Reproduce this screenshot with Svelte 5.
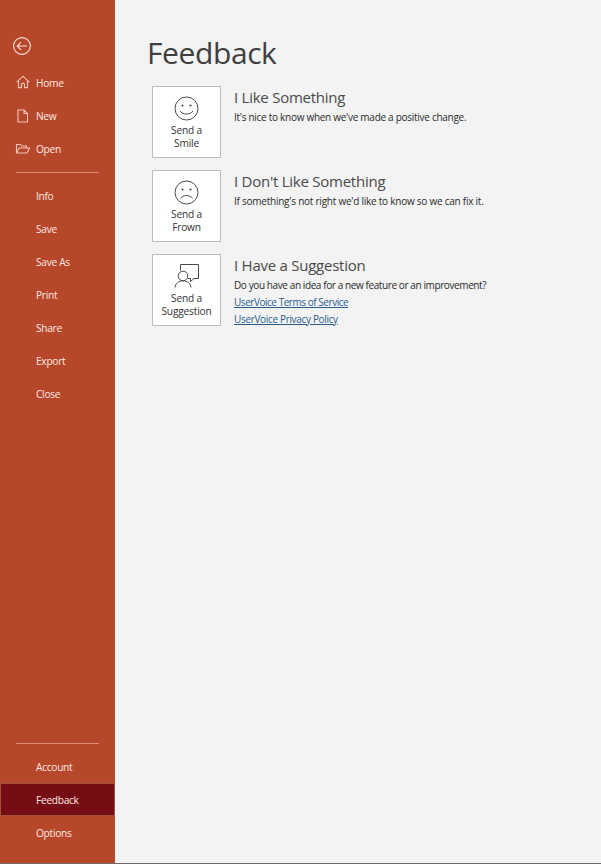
<script>
  const top = [
    { label: 'Home', icon: 'home' },
    { label: 'New', icon: 'new' },
    { label: 'Open', icon: 'open' }
  ];
  const mid = ['Info', 'Save', 'Save As', 'Print', 'Share', 'Export', 'Close'];
  const bottom = ['Account', 'Feedback', 'Options'];
</script>

<div class="page">
  <nav class="side">
    <div class="back">
      <svg width="20" height="20" viewBox="0 0 20 20" fill="none" stroke="#f9e3da" stroke-width="1.1">
        <circle cx="10" cy="10" r="8.4" />
        <path d="M15 10H5.5M9 6.2L5.2 10L9 13.8" />
      </svg>
    </div>
    {#each top as t}
      <div class="item">
        <span class="ic">
          {#if t.icon === 'home'}
            <svg width="16" height="16" viewBox="0 0 16 16" fill="none" stroke="#f3c4b3" stroke-width="1.1">
              <path d="M1.8 8.2L8 2.2L14.2 8.2M3.5 6.8V13.6H6.5V10.5C6.5 8.6 9.5 8.6 9.5 10.5V13.6H12.5V6.8" />
            </svg>
          {:else if t.icon === 'new'}
            <svg width="16" height="16" viewBox="0 0 16 16" fill="none" stroke="#f3c4b3" stroke-width="1.1">
              <path d="M3 3H9L12.5 6.5V15H3ZM9 3V6.5H12.5" />
            </svg>
          {:else}
            <svg width="16" height="16" viewBox="0 0 16 16" fill="none" stroke="#f3c4b3" stroke-width="1.1">
              <path d="M1.5 13V4.5H5.5L6.8 6H11.5V8M1.5 13L4 8H14.5L12 13Z" />
            </svg>
          {/if}
        </span>
        {t.label}
      </div>
    {/each}
    <div class="rule"></div>
    {#each mid as m}
      <div class="item">{m}</div>
    {/each}
    <div class="spacer"></div>
    <div class="rule low"></div>
    {#each bottom as b}
      <div class="item" class:active={b === 'Feedback'}>{b}</div>
    {/each}
  </nav>

  <main class="main">
    <h1>Feedback</h1>
    <section class="row">
      <div class="card">
        <svg width="26" height="26" viewBox="0 0 26 26" fill="none" stroke="#4a4a4a" stroke-width="1">
          <circle cx="12.5" cy="12.5" r="11.5" />
          <circle cx="8.5" cy="9.5" r="1.1" fill="#4a4a4a" stroke="none" />
          <circle cx="16.5" cy="9.5" r="1.1" fill="#4a4a4a" stroke="none" />
          <path d="M6 15C8.5 19 16.5 19 19 15" />
        </svg>
        <span>Send a<br />Smile</span>
      </div>
      <div class="text">
        <h2>I Like Something</h2>
        <p>It's nice to know when we've made a positive change.</p>
      </div>
    </section>
    <section class="row">
      <div class="card">
        <svg width="26" height="26" viewBox="0 0 26 26" fill="none" stroke="#4a4a4a" stroke-width="1">
          <circle cx="12.5" cy="12.5" r="11.5" />
          <circle cx="8.5" cy="9.5" r="1.1" fill="#4a4a4a" stroke="none" />
          <circle cx="16.5" cy="9.5" r="1.1" fill="#4a4a4a" stroke="none" />
          <path d="M6.5 18.5C9 14.5 16 14.5 18.5 18.5" />
        </svg>
        <span>Send a<br />Frown</span>
      </div>
      <div class="text">
        <h2>I Don't Like Something</h2>
        <p class="loose">If something's not right we'd like to know so we can fix it.</p>
      </div>
    </section>
    <section class="row">
      <div class="card">
        <svg width="26" height="26" viewBox="0 0 26 26" fill="none" stroke="#4a4a4a" stroke-width="1">
          <path d="M6.5 6.5V0.5H24.5V14.5H20L16.5 17.5V14.5H14" />
          <circle cx="9" cy="12" r="4.8" />
          <path d="M1 23.5C1.5 19.5 4.5 16.8 9 16.8C13.5 16.8 16.5 19.5 17 23.5" />
        </svg>
        <span>Send a<br />Suggestion</span>
      </div>
      <div class="text">
        <h2>I Have a Suggestion</h2>
        <p class="tight">Do you have an idea for a new feature or an improvement?</p>
        <a class="terms" href="#terms">UserVoice Terms of Service</a>
        <a href="#privacy">UserVoice Privacy Policy</a>
      </div>
    </section>
  </main>
</div>

<style>
  :global(body) {
    margin: 0;
    background: #f3f3f3;
  }
  .page {
    display: flex;
    height: 864px;
    width: 601px;
    font-family: "Open Sans", "Noto Sans", sans-serif;
    overflow: hidden;
    background: #f3f3f3;
    border-bottom: 1px solid #6f6a68;
    box-sizing: border-box;
  }
  .side {
    width: 115px;
    flex: none;
    display: flex;
    flex-direction: column;
    background: #b7472a;
    color: #fbe9e2;
    font-size: 10.2px;
    letter-spacing: -0.3px;
    padding-bottom: 14px;
    box-sizing: border-box;
  }
  .back {
    height: 20px;
    margin: 36px 0 10px 12px;
  }
  .item {
    height: 33px;
    flex: none;
    padding-left: 36px;
    display: flex;
    align-items: center;
    position: relative;
    box-sizing: border-box;
  }
  .ic {
    position: absolute;
    left: 15px;
    top: 8px;
    height: 16px;
  }
  .rule {
    height: 1px;
    flex: none;
    background: #de8d74;
    margin: 7px 16px 6px;
  }
  .rule.low {
    margin: 0 16px 6px;
  }
  .spacer {
    flex: 1;
  }
  .active {
    background: #770d14;
    outline: 1px solid #a3503c;
    outline-offset: -1px;
  }
  .main {
    flex: 1;
    padding-left: 33px;
  }
  h1 {
    margin: 32px 0 13px -1px;
    font-size: 30px;
    line-height: 41px;
    font-weight: 400;
    color: #3f3f3f;
    letter-spacing: -0.4px;
  }
  .row {
    display: flex;
    margin: 0 0 12px 4px;
    gap: 13px;
  }
  .card {
    width: 69px;
    height: 72px;
    box-sizing: border-box;
    flex: none;
    background: #fff;
    border: 1px solid #bdbdbd;
    display: flex;
    flex-direction: column;
    align-items: center;
    padding-top: 9px;
    font-size: 10.2px;
    line-height: 13px;
    letter-spacing: -0.2px;
    text-align: center;
    color: #333;
    gap: 2px;
  }
  .text {
    padding-top: 1px;
  }
  h2 {
    margin: 0;
    font-size: 15px;
    line-height: 20px;
    font-weight: 400;
    color: #4a4a4a;
    letter-spacing: -0.25px;
  }
  p {
    margin: 3px 0 0;
    font-size: 10px;
    line-height: 14px;
    letter-spacing: -0.28px;
    color: #2a2a2a;
  }
  p.loose {
    letter-spacing: -0.24px;
  }
  p.tight {
    letter-spacing: -0.4px;
  }
  a {
    display: block;
    font-size: 10px;
    line-height: 14px;
    letter-spacing: -0.33px;
    color: #2a5d8c;
    margin-top: 2.5px;
  }
  a.terms {
    margin-top: 3px;
    letter-spacing: -0.46px;
  }
</style>
